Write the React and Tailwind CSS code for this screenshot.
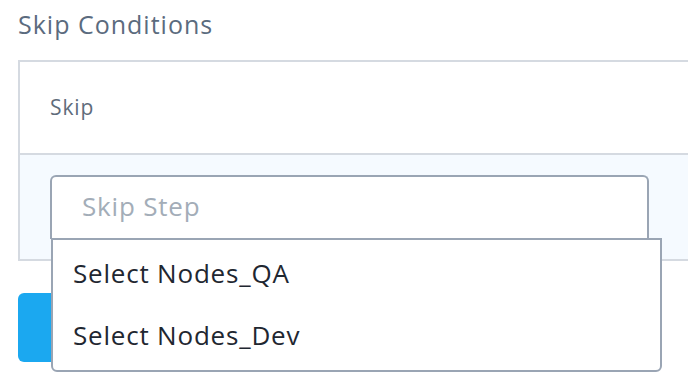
export default function App() {
	return (
		<div className="relative h-[392px] w-[688px] overflow-hidden bg-white font-['Open_Sans',sans-serif]">
			<h2 className="pl-[18px] pt-[8px] text-[25px] leading-[32px] tracking-[1px] text-[#5b6b7e]">
				Skip Conditions
			</h2>
			<div className="ml-[18px] mt-[20px] w-[690px] border-2 border-r-0 border-[#d5dae1]">
				<div className="flex h-[91px] items-center pl-[30px] text-[21px] tracking-[0.9px] text-[#5f6c7b]">
					Skip
				</div>
				<div className="h-[106px] border-t-2 border-[#d5dae1] bg-[#f5faff] pl-[30px] pt-[20px]">
					<div className="flex h-[64px] w-[599px] items-center rounded-t-[6px] border-2 border-b-0 border-[#9aa5b4] bg-white pb-[4px] pl-[30px] text-[26px] tracking-[0.8px] text-[#a3adb8]">
						Skip Step
					</div>
				</div>
			</div>
			<button className="ml-[18px] mt-[32px] h-[69px] w-[140px] rounded-[6px] bg-[#1ba8f0]" />
			<ul className="absolute left-[51px] top-[238px] h-[134px] w-[611px] rounded-b-[6px] border-2 border-[#9aa5b4] bg-white pt-[2px] text-[26px] tracking-[0.8px] text-[#1f2731]">
				<li className="flex h-[62px] items-center pl-[20px]">Select Nodes_QA</li>
				<li className="flex h-[62px] items-center pl-[20px]">Select Nodes_Dev</li>
			</ul>
		</div>
	);
}
